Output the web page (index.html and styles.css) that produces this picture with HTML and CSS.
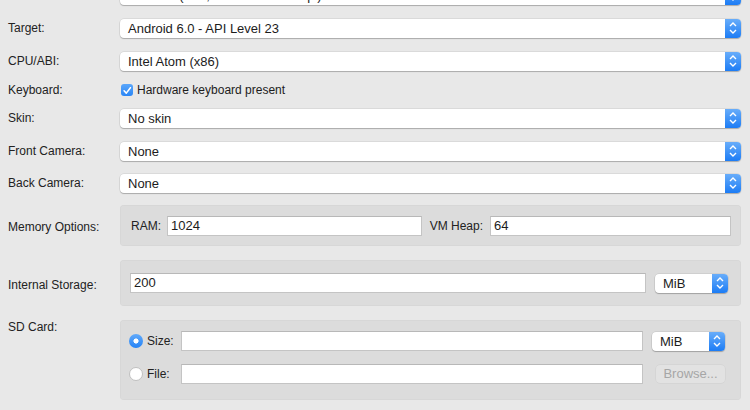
FILE: index.html
```html
<!DOCTYPE html>
<html>
<head>
<meta charset="utf-8">
<link rel="stylesheet" href="styles.css">
</head>
<body>
<div class="form">
  <div class="row r-device">
    <div class="label">Device:</div>
    <div class="select wide"><span class="val">Nexus 4 (4.7", 768 × 1280: xhdpi)</span><span class="step"><svg width="16" height="20" viewBox="0 0 16 20"><path d="M5 8 L8 5 L11 8 M5 12 L8 15 L11 12" fill="none" stroke="#fff" stroke-width="1.4"/></svg></span></div>
  </div>
  <div class="row r-gap13">
    <div class="label">Target:</div>
    <div class="select wide"><span class="val">Android 6.0 - API Level 23</span><span class="step"><svg width="16" height="20" viewBox="0 0 16 20"><path d="M5 8 L8 5 L11 8 M5 12 L8 15 L11 12" fill="none" stroke="#fff" stroke-width="1.4"/></svg></span></div>
  </div>
  <div class="row r-gap13">
    <div class="label">CPU/ABI:</div>
    <div class="select wide"><span class="val">Intel Atom (x86)</span><span class="step"><svg width="16" height="20" viewBox="0 0 16 20"><path d="M5 8 L8 5 L11 8 M5 12 L8 15 L11 12" fill="none" stroke="#fff" stroke-width="1.4"/></svg></span></div>
  </div>
  <div class="row r-gap9">
    <div class="label">Keyboard:</div>
    <div class="check-wrap"><span class="checkbox"><svg width="13" height="13" viewBox="0 0 13 13"><path d="M3.2 6.8 L5.5 9.2 L9.8 3.6" fill="none" stroke="#fff" stroke-width="1.6" stroke-linecap="round" stroke-linejoin="round"/></svg></span><span class="check-text">Hardware keyboard present</span></div>
  </div>
  <div class="row r-gap8">
    <div class="label">Skin:</div>
    <div class="select wide"><span class="val">No skin</span><span class="step"><svg width="16" height="20" viewBox="0 0 16 20"><path d="M5 8 L8 5 L11 8 M5 12 L8 15 L11 12" fill="none" stroke="#fff" stroke-width="1.4"/></svg></span></div>
  </div>
  <div class="row r-gap13">
    <div class="label">Front Camera:</div>
    <div class="select wide"><span class="val">None</span><span class="step"><svg width="16" height="20" viewBox="0 0 16 20"><path d="M5 8 L8 5 L11 8 M5 12 L8 15 L11 12" fill="none" stroke="#fff" stroke-width="1.4"/></svg></span></div>
  </div>
  <div class="row r-gap12">
    <div class="label">Back Camera:</div>
    <div class="select wide"><span class="val">None</span><span class="step"><svg width="16" height="20" viewBox="0 0 16 20"><path d="M5 8 L8 5 L11 8 M5 12 L8 15 L11 12" fill="none" stroke="#fff" stroke-width="1.4"/></svg></span></div>
  </div>
  <div class="row r-gap12 r-box">
    <div class="label lower">Memory Options:</div>
    <div class="box mem">
      <span class="in-label">RAM:</span><div class="field f-ram">1024</div>
      <span class="in-label vm">VM Heap:</span><div class="field f-vm">64</div>
    </div>
  </div>
  <div class="row r-gap14 r-box">
    <div class="label lower">Internal Storage:</div>
    <div class="box storage">
      <div class="field grow">200</div>
      <div class="select unit"><span class="val">MiB</span><span class="step"><svg width="16" height="20" viewBox="0 0 16 20"><path d="M5 8 L8 5 L11 8 M5 12 L8 15 L11 12" fill="none" stroke="#fff" stroke-width="1.4"/></svg></span></div>
    </div>
  </div>
  <div class="row r-gap14 r-top">
    <div class="label top">SD Card:</div>
    <div class="box sd">
      <div class="sd-row">
        <span class="radio on"></span><span class="radio-label">Size:</span>
        <div class="field grow"></div>
        <div class="select unit"><span class="val">MiB</span><span class="step"><svg width="16" height="20" viewBox="0 0 16 20"><path d="M5 8 L8 5 L11 8 M5 12 L8 15 L11 12" fill="none" stroke="#fff" stroke-width="1.4"/></svg></span></div>
      </div>
      <div class="sd-row">
        <span class="radio"></span><span class="radio-label">File:</span>
        <div class="field grow"></div>
        <div class="button disabled">Browse...</div>
      </div>
    </div>
  </div>
</div>
</body>
</html>
```

FILE: styles.css
```css
html, body {
  margin: 0;
  padding: 0;
  background: #e8e8e8;
  height: 100%;
  overflow: hidden;
}
body {
  font-family: "Liberation Sans", Arial, sans-serif;
  font-size: 12.5px;
  color: #262626;
}
.form {
  display: flex;
  flex-direction: column;
  margin-top: -15px;
  padding: 0 9px 0 8px;
}
.row {
  display: flex;
  align-items: center;
  min-height: 20px;
}
.r-gap8 { margin-top: 8px; }
.r-gap9 { margin-top: 9px; }
.r-gap12 { margin-top: 12px; }
.r-gap13 { margin-top: 13px; }
.r-gap14 { margin-top: 14px; }
.r-top { align-items: flex-start; }
.label {
  width: 112px;
  flex: none;
  font-size: 12px;
  color: #222;
}
.label.lower { padding-top: 3px; }
.label.top { line-height: 14px; }
.select {
  position: relative;
  display: flex;
  align-items: center;
  height: 19px;
  background: #fff;
  border-radius: 4px;
  box-shadow: 0 0 0 0.5px rgba(0,0,0,0.12), 0 1px 1px rgba(0,0,0,0.22);
  color: #1c1c1c;
  font-size: 13px;
}
.select.wide { flex: 1; }
.select .val { flex: 1; padding-left: 8px; white-space: nowrap; overflow: hidden; }
.select .step {
  width: 16px;
  height: 100%;
  flex: none;
  border-radius: 0 4px 4px 0;
  background: linear-gradient(#68adfa, #1c7cf5);
  display: flex;
  align-items: center;
  justify-content: center;
}
.select .step svg { display: block; }
.check-wrap {
  display: flex;
  align-items: center;
  margin-left: 1px;
  height: 20px;
}
.checkbox {
  width: 12px;
  height: 12px;
  border-radius: 3px;
  background: linear-gradient(#5aa6fa, #2a86f6);
  display: inline-flex;
  margin-right: 4px;
  overflow: hidden;
}
.checkbox svg { margin: -0.5px 0 0 -0.5px; }
.check-text { color: #1c1c1c; font-size: 12px; }
.box {
  flex: 1;
  background: #dcdcdc;
  border-radius: 4px;
  box-shadow: inset 0 0 0 0.5px rgba(0,0,0,0.04);
}
.mem {
  display: flex;
  align-items: center;
  height: 41px;
  padding: 0 10px 0 11px;
}
.in-label { margin-right: 6px; color: #222; font-size: 12px; }
.in-label.vm { margin-left: 8px; margin-right: 7px; }
.field {
  height: 18px;
  background: #fff;
  border: 1px solid #c4c4c4;
  border-top-color: #b8b8b8;
  box-sizing: content-box;
  padding-left: 3px;
  line-height: 18px;
  font-size: 13px;
  color: #1c1c1c;
}
.f-ram { flex: 255; }
.f-vm { flex: 241; }
.grow { flex: 1; }
.storage {
  display: flex;
  align-items: center;
  height: 46px;
  padding: 0 13px 0 10px;
  gap: 9px;
}
.select.unit { width: 73px; flex: none; }
.sd {
  height: 80px;
  padding: 11px 16px 0 9px;
  box-sizing: border-box;
  display: flex;
  flex-direction: column;
  gap: 13px;
}
.sd-row {
  display: flex;
  align-items: center;
  height: 20px;
}
.sd-row .select.unit { margin-left: 9px; }
.radio {
  width: 14px;
  height: 14px;
  border-radius: 50%;
  box-sizing: border-box;
  background: #fff;
  border: 1px solid #c0c0c0;
  flex: none;
  position: relative;
}
.radio.on {
  border: none;
  background: radial-gradient(circle, #fff 0 2.3px, transparent 2.8px), linear-gradient(#62aafa, #2583f6);
}
.radio-label { width: 34px; margin-left: 4px; color: #222; font-size: 12px; }
.button {
  width: 69px;
  height: 18px;
  margin-left: 13px;
  border-radius: 4px;
  background: #e2e2e2;
  box-shadow: 0 0 0 0.5px rgba(0,0,0,0.06);
  color: #a6a6a6;
  text-align: center;
  line-height: 18px;
  font-size: 13px;
  flex: none;
}
```
